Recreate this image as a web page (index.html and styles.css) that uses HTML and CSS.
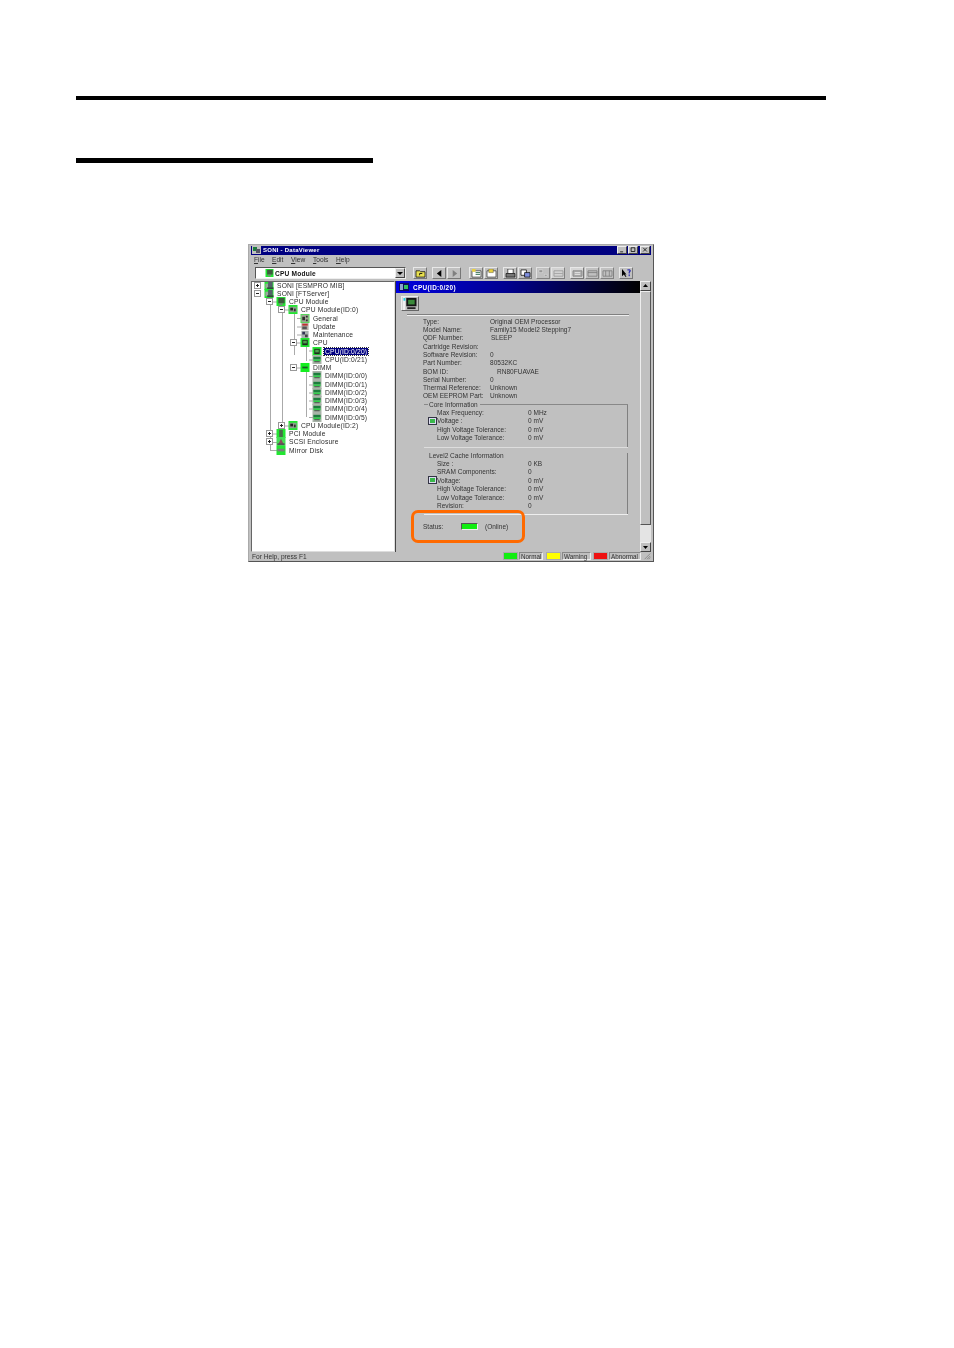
FILE: index.html
```html
<!DOCTYPE html>
<html lang="en">
<head>
<meta charset="utf-8">
<title>SONI - DataViewer</title>
<link rel="stylesheet" href="styles.css">
</head>
<body>
<svg class="defs" width="0" height="0" aria-hidden="true">
  <symbol id="i-pc" viewBox="0 0 10 10"><rect width="10" height="10" fill="#22e632"/><rect x="1" y="3" width="3" height="5" fill="#9aa89a"/><rect x="4" y="1" width="5" height="6" fill="#55606a"/><rect x="3" y="7" width="7" height="2" fill="#34423c"/></symbol>
  <symbol id="i-mod" viewBox="0 0 10 10"><rect width="10" height="10" fill="#22e632"/><rect x="2" y="1" width="7" height="6" fill="#3d5a3d"/><rect x="3" y="7" width="4" height="2" fill="#788878"/></symbol>
  <symbol id="i-board" viewBox="0 0 10 10"><rect width="10" height="10" fill="#22e632"/><rect x="1" y="2" width="8" height="6" fill="#8f9f8f"/><rect x="2" y="3" width="3" height="3" fill="#222"/><rect x="6" y="4" width="2" height="3" fill="#333"/></symbol>
  <symbol id="i-doc" viewBox="0 0 10 10"><rect width="10" height="10" fill="#4fdc55"/><rect x="1" y="1" width="8" height="8" fill="#a0a894"/><path d="M2 3h3v4H2zM6 2h2v2H6zM6 6h2v2H6z" fill="#2d2d2d"/></symbol>
  <symbol id="i-upd" viewBox="0 0 10 10"><rect x="1" y="1" width="8" height="8" fill="#b8b0a8"/><path d="M2 2h6v2H2z" fill="#c03030"/><path d="M2 5h5v3H2z" fill="#555"/></symbol>
  <symbol id="i-mnt" viewBox="0 0 10 10"><rect x="1" y="1" width="8" height="8" fill="#a8b0b0"/><path d="M2 2h3v3H2z" fill="#335"/><path d="M5 5h3v3H5z" fill="#444"/></symbol>
  <symbol id="i-cpu" viewBox="0 0 10 10"><rect width="10" height="10" fill="#22e632"/><rect x="2" y="2" width="6" height="6" fill="#1e2a1e"/><rect x="3" y="3" width="4" height="3" fill="#4fa04f"/></symbol>
  <symbol id="i-dimm" viewBox="0 0 10 10"><rect width="10" height="10" fill="#a8b4a8"/><rect x="1" y="2" width="8" height="3" fill="#1d7d3d"/><rect x="1" y="5" width="8" height="2" fill="#2fd04a"/><rect x="2" y="7" width="6" height="1" fill="#444"/></symbol>
  <symbol id="i-dgrp" viewBox="0 0 10 10"><rect width="10" height="10" fill="#14ee20"/><rect x="2" y="4" width="6" height="2" fill="#1a5a2a"/></symbol>
  <symbol id="i-pci" viewBox="0 0 10 10"><rect width="10" height="10" fill="#22e632"/><rect x="3" y="1" width="4" height="8" fill="#4a6a4a"/></symbol>
  <symbol id="i-scsi" viewBox="0 0 10 10"><rect width="10" height="10" fill="#44dd55"/><path d="M2 8 5 2l3 6z" fill="#8a4a5a"/><rect x="1" y="7" width="8" height="2" fill="#555"/></symbol>
  <symbol id="i-disk" viewBox="0 0 10 10"><rect width="10" height="10" fill="#22e632"/><rect x="1" y="3" width="8" height="3" fill="#77807a"/></symbol>
</svg>

<main class="page">
  <div class="rule rule-main"></div>
  <div class="rule rule-sub"></div>

  <section class="window">
    <header class="titlebar">
      <svg class="app-icon" viewBox="0 0 9 8"><rect width="9" height="8" fill="#c0c0c0"/><rect x="1" y="1" width="4" height="4" fill="#1f7f3f"/><rect x="4" y="3" width="4" height="4" fill="#556"/></svg>
      <span class="title-text">SONI - DataViewer</span>
      <span class="win-btns">
        <span class="win-btn"><svg viewBox="0 0 9 8"><path d="M2 6h4v1H2z" fill="#000"/></svg></span>
        <span class="win-btn"><svg viewBox="0 0 9 8"><path d="M2 1h5v5H2z" fill="none" stroke="#000"/></svg></span>
        <span class="win-btn win-close"><svg viewBox="0 0 9 8"><path d="M2 1l5 5M7 1 2 6" stroke="#000"/></svg></span>
      </span>
    </header>

    <nav class="menubar">
      <span class="m-file"><u>F</u>ile</span>
      <span class="m-edit"><u>E</u>dit</span>
      <span class="m-view"><u>V</u>iew</span>
      <span class="m-tools"><u>T</u>ools</span>
      <span class="m-help"><u>H</u>elp</span>
    </nav>

    <div class="toolbar">
      <div class="combo">
        <svg class="combo-icon"><use href="#i-mod"/></svg>
        <span class="combo-text">CPU Module</span>
        <span class="combo-btn"><svg viewBox="0 0 8 8"><path d="M1 3h6L4 6z" fill="#000"/></svg></span>
      </div>
      <span class="tb"><svg viewBox="0 0 12 10"><path d="M1 2h4l1 1h5v6H1z" fill="#e8e050" stroke="#000" stroke-width=".8"/><path d="M5 7V5h3" fill="none" stroke="#000" stroke-width=".9"/></svg></span>
      <span class="tb g-nav"><svg viewBox="0 0 12 10"><path d="M8 1v8L3 5z" fill="#000"/></svg></span>
      <span class="tb g-fwd"><svg viewBox="0 0 12 10"><path d="M4 1v8l5-4z" fill="#808080"/></svg></span>
      <span class="tb gap-8"><svg viewBox="0 0 12 10"><path d="M1 2h10v7H1z" fill="#fff" stroke="#333" stroke-width=".8"/><path d="M1 0h4v3H1z" fill="#e8d040"/><path d="M5 4h5M5 6h5" stroke="#2a6a4a" stroke-width="1"/></svg></span>
      <span class="tb"><svg viewBox="0 0 12 10"><path d="M1 2h10v7H1z" fill="#fff" stroke="#333" stroke-width=".8"/><path d="M3 0h5v4H3z" fill="#e8d040" stroke="#333" stroke-width=".4"/></svg></span>
      <span class="tb gap-5"><svg viewBox="0 0 12 10"><path d="M1 5h10v4H1z" fill="#777" stroke="#000" stroke-width=".7"/><path d="M3 0h6v5H3z" fill="#fff" stroke="#000" stroke-width=".7"/></svg></span>
      <span class="tb"><svg viewBox="0 0 12 10"><path d="M1 1h6v6H1z" fill="#fff" stroke="#000" stroke-width=".8"/><path d="M5 4h6v5H5z" fill="#8090e0" stroke="#000" stroke-width=".8"/></svg></span>
      <span class="tb gap-4 off"><svg viewBox="0 0 12 10"><path d="M1 1h4v3H1zM7 6h3v2H7z" fill="#909090" stroke="#fff" stroke-width=".4"/></svg></span>
      <span class="tb off sunk"><svg viewBox="0 0 12 10"><path d="M1 2h10v6H1z" fill="none" stroke="#909090" stroke-width=".9"/><path d="M1 5h10" stroke="#a0a0a0"/></svg></span>
      <span class="tb gap-5 sunk"><svg viewBox="0 0 12 10"><path d="M1 2h10v6H1z" fill="#b0b0b0" stroke="#808080" stroke-width=".9"/><path d="M3 4h6M3 6h6" stroke="#fff" stroke-width=".7"/></svg></span>
      <span class="tb off"><svg viewBox="0 0 12 10"><path d="M1 2h10v6H1zM1 4h10" fill="none" stroke="#707070" stroke-width=".9"/></svg></span>
      <span class="tb off"><svg viewBox="0 0 12 10"><path d="M1 2h10v6H1zM4 2v6M8 2v6" fill="none" stroke="#707070" stroke-width=".9"/></svg></span>
      <span class="tb gap-5"><svg viewBox="0 0 12 10"><path d="M1 0v8l2-2 2 3 1-1-2-2h2z" fill="#000"/><path d="M7 1h3v2H9v2" fill="none" stroke="#00a" stroke-width="1"/><path d="M9 6v2" stroke="#00a"/></svg></span>
    </div>

    <div class="panes">
      <div class="tree">
        <svg class="tree-lines" width="142" height="175" viewBox="0 0 142 175" aria-hidden="true"><path d="M6.500 9v4M18.500 17v152M30.500 25v119M42.500 33v41M54.500 66v14M54.500 91v45M21 21h4M33 29h4M45 37.500h10M45 46h10M45 54h10M45 62h4M57 70h6M57 79h6M45 87h4M57 95.500h6M57 104h6M57 112h6M57 120h6M57 128h6M57 136.500h6M33 145h4M21 153h4M21 161.500h4M18 169.500h7" fill="none" stroke="#aaa" stroke-width="1"/></svg>
        <div class="node d0"><span class="exp plus"></span><svg class="ti"><use href="#i-pc"/></svg><span class="tl">SONI [ESMPRO MIB]</span></div>
        <div class="node d0"><span class="exp minus"></span><svg class="ti"><use href="#i-pc"/></svg><span class="tl">SONI [FTServer]</span></div>
        <div class="node d1"><span class="exp minus"></span><svg class="ti"><use href="#i-mod"/></svg><span class="tl">CPU Module</span></div>
        <div class="node d2"><span class="exp minus"></span><svg class="ti"><use href="#i-board"/></svg><span class="tl">CPU Module(ID:0)</span></div>
        <div class="node d3"><span class="exp none"></span><svg class="ti"><use href="#i-doc"/></svg><span class="tl">General</span></div>
        <div class="node d3"><span class="exp none"></span><svg class="ti"><use href="#i-upd"/></svg><span class="tl">Update</span></div>
        <div class="node d3"><span class="exp none"></span><svg class="ti"><use href="#i-mnt"/></svg><span class="tl">Maintenance</span></div>
        <div class="node d3"><span class="exp minus"></span><svg class="ti"><use href="#i-cpu"/></svg><span class="tl">CPU</span></div>
        <div class="node d4"><span class="exp none"></span><svg class="ti"><use href="#i-cpu"/></svg><span class="tl sel">CPU(ID:0/20)</span></div>
        <div class="node d4"><span class="exp none"></span><svg class="ti"><use href="#i-dimm"/></svg><span class="tl">CPU(ID:0/21)</span></div>
        <div class="node d3"><span class="exp minus"></span><svg class="ti"><use href="#i-dgrp"/></svg><span class="tl">DIMM</span></div>
        <div class="node d4"><span class="exp none"></span><svg class="ti"><use href="#i-dimm"/></svg><span class="tl">DIMM(ID:0/0)</span></div>
        <div class="node d4"><span class="exp none"></span><svg class="ti"><use href="#i-dimm"/></svg><span class="tl">DIMM(ID:0/1)</span></div>
        <div class="node d4"><span class="exp none"></span><svg class="ti"><use href="#i-dimm"/></svg><span class="tl">DIMM(ID:0/2)</span></div>
        <div class="node d4"><span class="exp none"></span><svg class="ti"><use href="#i-dimm"/></svg><span class="tl">DIMM(ID:0/3)</span></div>
        <div class="node d4"><span class="exp none"></span><svg class="ti"><use href="#i-dimm"/></svg><span class="tl">DIMM(ID:0/4)</span></div>
        <div class="node d4"><span class="exp none"></span><svg class="ti"><use href="#i-dimm"/></svg><span class="tl">DIMM(ID:0/5)</span></div>
        <div class="node d2"><span class="exp plus"></span><svg class="ti"><use href="#i-board"/></svg><span class="tl">CPU Module(ID:2)</span></div>
        <div class="node d1"><span class="exp plus"></span><svg class="ti"><use href="#i-pci"/></svg><span class="tl">PCI Module</span></div>
        <div class="node d1"><span class="exp plus"></span><svg class="ti"><use href="#i-scsi"/></svg><span class="tl">SCSI Enclosure</span></div>
        <div class="node d1"><span class="exp none"></span><svg class="ti"><use href="#i-disk"/></svg><span class="tl">Mirror Disk</span></div>
      </div>

      <div class="detail">
        <div class="detail-main">
          <div class="detail-head">
            <svg class="head-icon" viewBox="0 0 10 8"><rect width="10" height="8" fill="#0a0a60"/><rect x="1" y="1" width="3" height="6" fill="#8aa0d0"/><rect x="5" y="2" width="4" height="4" fill="#30c060"/></svg>
            <span>CPU(ID:0/20)</span>
          </div>
          <div class="detail-body">
            <span class="big-icon"><svg viewBox="0 0 16 14"><rect x="0" y="0" width="3" height="14" fill="#f0f0f0"/><rect x="1" y="1" width="2" height="3" fill="#20d0e0"/><rect x="4" y="1" width="11" height="9" fill="#141414"/><rect x="6" y="3" width="7" height="5" fill="#3a8a3a"/><rect x="5" y="11" width="9" height="2" fill="#222"/></svg></span>
            <hr class="sep">
            <div class="rows">
              <div class="row"><span class="k">Type:</span><span class="v">Original OEM Processor</span></div>
              <div class="row"><span class="k">Model Name:</span><span class="v">Family15 Model2 Stepping7</span></div>
              <div class="row"><span class="k">QDF Number:</span><span class="v v-in1">SLEEP</span></div>
              <div class="row"><span class="k">Cartridge Revision:</span><span class="v"></span></div>
              <div class="row"><span class="k">Software Revision:</span><span class="v">0</span></div>
              <div class="row"><span class="k">Part Number:</span><span class="v">80532KC</span></div>
              <div class="row"><span class="k">BOM ID:</span><span class="v v-in2">RN80FUAVAE</span></div>
              <div class="row"><span class="k">Serial Number:</span><span class="v">0</span></div>
              <div class="row"><span class="k">Thermal Reference:</span><span class="v">Unknown</span></div>
              <div class="row"><span class="k">OEM EEPROM Part:</span><span class="v">Unknown</span></div>
            </div>

            <div class="group group-core">
              <div class="group-title">Core Information</div>
              <div class="grow"><span class="gk">Max Frequency:</span><span class="gv">0 MHz</span></div>
              <div class="grow"><span class="gk gk-ic"><span class="mini"></span>Voltage :</span><span class="gv">0 mV</span></div>
              <div class="grow"><span class="gk">High Voltage Tolerance:</span><span class="gv">0 mV</span></div>
              <div class="grow"><span class="gk">Low Voltage Tolerance:</span><span class="gv">0 mV</span></div>
            </div>

            <div class="group group-cache">
              <div class="group-title">Level2 Cache Information</div>
              <div class="grow"><span class="gk">Size :</span><span class="gv">0 KB</span></div>
              <div class="grow"><span class="gk">SRAM Components:</span><span class="gv">0</span></div>
              <div class="grow"><span class="gk gk-ic"><span class="mini"></span>Voltage:</span><span class="gv">0 mV</span></div>
              <div class="grow"><span class="gk">High Voltage Tolerance:</span><span class="gv">0 mV</span></div>
              <div class="grow"><span class="gk">Low Voltage Tolerance:</span><span class="gv">0 mV</span></div>
              <div class="grow"><span class="gk">Revision:</span><span class="gv">0</span></div>
            </div>

            <div class="status">
              <span class="status-k">Status:</span>
              <span class="status-led"></span>
              <span>(Online)</span>
            </div>
            <div class="highlight"></div>
          </div>
        </div>
        <div class="scroll">
          <span class="sb-btn"><svg viewBox="0 0 9 8"><path d="M2 5h5L4.500 2z" fill="#000"/></svg></span>
          <span class="sb-thumb"></span>
          <span class="sb-track"></span>
          <span class="sb-btn"><svg viewBox="0 0 9 8"><path d="M2 3h5L4.500 6z" fill="#000"/></svg></span>
        </div>
      </div>
    </div>

    <footer class="statusbar">
      <span class="sb-text">For Help, press F1</span>
      <span class="swatch sw-g"></span><span class="lg lg-n">Normal</span>
      <span class="swatch sw-y"></span><span class="lg lg-w">Warning</span>
      <span class="swatch sw-r"></span><span class="lg lg-a">Abnormal</span>
      <svg class="grip" viewBox="0 0 10 8"><path d="M9 1 2 8M9 4 5 8M9 6 7 8" stroke="#808080" fill="none"/></svg>
    </footer>
  </section>
</main>
</body>
</html>
```

FILE: styles.css
```css
* { box-sizing: border-box; }
html, body { margin: 0; padding: 0; background: #fff; }
.defs { position: absolute; }
.page { width: 954px; height: 1348px; padding: 96px 0 0 76px; overflow: hidden; }
.rule { background: #000; }
.rule-main { width: 750px; height: 4px; }
.rule-sub { width: 297px; height: 5px; margin-top: 58px; }

.window {
  width: 406px; height: 318px; margin: 81px 0 0 172px;
  background: #c0c0c0; border: 1px solid #555; border-top-color: #aaa; border-left-color: #aaa;
  padding: 1px 2px; display: flex; flex-direction: column;
  font: 6.600px "Liberation Sans", Arial, sans-serif; color: #1c1c1c;
  filter: blur(.35px);
}
.titlebar { height: 9px; flex: none; background: #000080; display: flex; align-items: center; padding: 0 0 1px 1px; color: #fff; font-weight: bold; letter-spacing: .25px; }
.app-icon { width: 9px; height: 8px; margin-right: 2px; }
.title-text { font-size: 6px; }
.win-btns { margin-left: auto; display: flex; margin-right: 1px; }
.win-btn { width: 10px; height: 8px; margin-left: 1px; background: #c0c0c0; border: 1px solid; border-color: #eee #444 #444 #eee; display: flex; }
.win-close { margin-left: 2px; }
.win-btn svg { width: 100%; height: 100%; }

.menubar { height: 11px; flex: none; display: flex; align-items: center; padding-bottom: 2px; color: #333; }
.m-file { margin-left: 3px; width: 18px; }
.m-edit { width: 19px; }
.m-view { width: 22px; }
.m-tools { width: 23px; }

.toolbar { height: 15px; flex: none; display: flex; align-items: center; padding: 0 0 1px 4px; }
.combo { width: 151px; height: 12px; background: #fff; border: 1px solid; border-color: #555 #eee #eee #555; display: flex; align-items: center; padding-left: 9px; margin-right: 6px; }
.combo-icon { width: 9px; height: 8px; margin-right: 1px; }
.combo-text { font-weight: bold; font-size: 6.600px; letter-spacing: .2px; color: #111; }
.combo-btn { margin-left: auto; width: 10px; height: 10px; background: #c0c0c0; border: 1px solid; border-color: #eee #444 #444 #eee; display: flex; }
.combo-btn svg { width: 100%; height: 100%; }
.tb { width: 14px; height: 12px; border: 1px solid; border-color: #e8e8e8 #777 #777 #e8e8e8; display: flex; align-items: center; justify-content: center; margin-left: 1px; flex: none; }
.tb svg { width: 11px; height: 9px; }
.g-nav { margin-left: 5px; }
.g-fwd { margin-left: 1px; }
.gap-8 { margin-left: 8px; }
.gap-5 { margin-left: 5px; }
.gap-4 { margin-left: 4px; }
.off { opacity: .85; }
.sunk { background: #d6d6d6; }

.panes { height: 271px; flex: none; display: flex; }
.tree { position: relative; width: 144px; flex: none; background: #fff; border: 1px solid; border-color: #666 #ddd #ddd #666; overflow: hidden; }
.tree-lines { position: absolute; left: 0; top: -1px; }
.node { position: relative; top: -1px; height: 8.260px; display: flex; align-items: center; color: #2c2c2c; font-size: 6.700px; letter-spacing: .17px; white-space: nowrap; }
.d0 { padding-left: 2px; }
.d1 { padding-left: 14px; }
.d2 { padding-left: 26px; }
.d3 { padding-left: 38px; }
.d4 { padding-left: 50px; }
.exp { width: 7px; height: 7px; margin-right: 3px; flex: none; position: relative; }
.plus, .minus { background: #fff; border: 1px solid #999; }
.plus::before, .minus::before { content: ""; position: absolute; left: 1px; top: 2px; width: 3px; height: 1px; background: #222; }
.plus::after { content: ""; position: absolute; left: 2px; top: 1px; width: 1px; height: 3px; background: #222; }
.ti { width: 10px; height: 9px; margin-right: 3px; flex: none; }
.sel { background: #000080; color: #fff; outline: 1px dotted #333; margin-left: -1px; padding: 0 1px; line-height: 7px; }

.detail { width: 256px; flex: none; display: flex; border-left: 1px solid #444; }
.detail-main { flex: 1; min-width: 0; }
.detail-head { height: 12px; background: linear-gradient(90deg, #0000e0 0%, #000090 45%, #000 100%); display: flex; align-items: center; color: #fff; font-weight: bold; padding-left: 3px; font-size: 6.400px; letter-spacing: .35px; }
.head-icon { width: 10px; height: 8px; margin-right: 4px; }
.detail-body { position: relative; padding: 3px 0 0 5px; color: #333; font-size: 6.500px; letter-spacing: .02px; }
.big-icon { display: block; width: 18px; height: 15px; border: 1px solid; border-color: #eee #666 #666 #eee; }
.big-icon svg { display: block; width: 100%; height: 100%; }
.sep { margin: 3px 11px 0 6px; height: 2px; border: 0; border-top: 1px solid #808080; border-bottom: 1px solid #eee; }
.rows { margin: 1px 0 0 22px; }
.row { height: 8.320px; display: flex; align-items: center; white-space: nowrap; }
.k { width: 67px; flex: none; }
.v-in1 { padding-left: 1px; }
.v-in2 { padding-left: 7px; }

.group { margin-left: 23px; width: 204px; padding-left: 13px; position: relative; }
.group::after { content: ""; position: absolute; right: 0; top: 0; bottom: 0; width: 1px; background: #808080; }
.group-core { height: 43px; border-top: 1px solid #888; box-shadow: 0 1px 0 #ddd; margin-top: 4px; }
.group-cache { margin-top: 9px; height: 63px; border-bottom: 1px solid #eee; }
.group-cache::after { top: 1px; }
.group-title { height: 7px; margin: -4px 0 0 -9px; width: fit-content; background: #c0c0c0; padding: 0 2px 0 1px; line-height: 8px; white-space: nowrap; }
.grow { height: 8.500px; display: flex; align-items: center; white-space: nowrap; }
.gk { width: 91px; flex: none; }
.gk-ic { display: flex; align-items: center; margin-left: -9px; width: 100px; }
.mini { width: 9px; height: 8px; background: linear-gradient(#39b84a, #39b84a) center / 5px 4px no-repeat #dcdcf0; border: 1px solid #334; flex: none; }

.status { display: flex; align-items: center; height: 8px; margin: 7px 0 0 22px; white-space: nowrap; }
.status-k { width: 38px; }
.status-led { width: 17px; height: 7px; background: #11ee11; border: 1px solid; border-color: #555 #eee #eee #555; margin-right: 7px; }
.highlight { position: absolute; left: 15px; top: 217px; width: 114px; height: 33px; border: 3px solid #ff6a00; border-radius: 7px; }

.scroll { width: 11px; flex: none; display: flex; flex-direction: column; }
.sb-btn { height: 10px; flex: none; background: #c0c0c0; border: 1px solid; border-color: #eee #444 #444 #eee; display: flex; }
.sb-btn svg { width: 100%; height: 100%; }
.sb-thumb { height: 234px; background: #c0c0c0; border: 1px solid; border-color: #eee #555 #555 #eee; }
.sb-track { flex: 1; background: #e4e4e4; }

.statusbar { flex: 1; display: flex; align-items: center; padding-left: 1px; color: #333; white-space: nowrap; }
.sb-text { width: 251px; flex: none; }
.swatch { height: 8px; flex: none; border: 1px solid #aaa; }
.sw-g { width: 15px; background: #11ee11; }
.sw-y { width: 15px; background: #ffff00; margin-left: 3px; }
.sw-r { width: 15px; background: #ee1111; margin-left: 2px; }
.lg { height: 8px; line-height: 7px; flex: none; border: 1px solid; border-color: #888 #eee #eee #888; padding-left: 1px; font-size: 6.300px; }
.lg-n { width: 24px; margin-left: 1px; }
.lg-w { width: 29px; margin-left: 1px; }
.lg-a { width: 32px; margin-left: 1px; }
.grip { width: 10px; height: 8px; margin-left: 2px; }
```
